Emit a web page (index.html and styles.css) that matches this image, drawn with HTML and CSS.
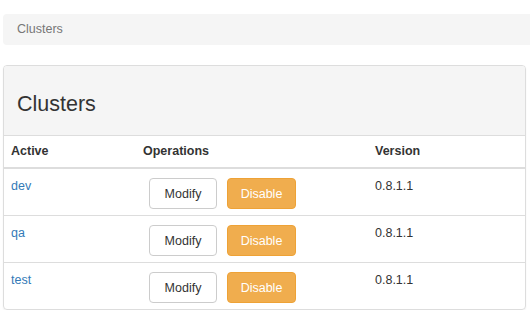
FILE: index.html
```html
<!DOCTYPE html>
<html lang="en">
<head>
    <meta charset="UTF-8">
    <title>Clusters</title>
    <link rel="stylesheet" href="styles.css">
</head>
<body>
    <div class="breadcrumb">Clusters</div>

    <div class="panel">
        <div class="panel-heading">
            <h2>Clusters</h2>
        </div>
        <table class="table">
            <thead>
                <tr>
                    <th class="col-active">Active</th>
                    <th class="col-ops">Operations</th>
                    <th>Version</th>
                </tr>
            </thead>
            <tbody>
                <tr>
                    <td><a href="#">dev</a></td>
                    <td>
                        <div class="ops">
                            <button class="btn btn-default">Modify</button>
                            <button class="btn btn-warning">Disable</button>
                        </div>
                    </td>
                    <td>0.8.1.1</td>
                </tr>
                <tr>
                    <td><a href="#">qa</a></td>
                    <td>
                        <div class="ops">
                            <button class="btn btn-default">Modify</button>
                            <button class="btn btn-warning">Disable</button>
                        </div>
                    </td>
                    <td>0.8.1.1</td>
                </tr>
                <tr>
                    <td><a href="#">test</a></td>
                    <td>
                        <div class="ops">
                            <button class="btn btn-default">Modify</button>
                            <button class="btn btn-warning">Disable</button>
                        </div>
                    </td>
                    <td>0.8.1.1</td>
                </tr>
            </tbody>
        </table>
    </div>
</body>
</html>
```

FILE: styles.css
```css
* {
    box-sizing: border-box;
    margin: 0;
    padding: 0;
}

body {
    font-family: 'Liberation Sans', Arial, sans-serif;
    font-size: 12.5px;
    line-height: 16px;
    color: #333;
    background: #fff;
}

.breadcrumb {
    margin: 14px 0 0 3px;
    height: 31px;
    line-height: 31px;
    padding: 0 14px;
    background-color: #f5f5f5;
    border-radius: 4px 0 0 4px;
    color: #777;
}

.panel {
    margin: 20px 4px 0 3px;
    border: 1px solid #ddd;
    border-radius: 4px;
    box-shadow: 0 1px 2px rgba(0,0,0,0.06);
    overflow: hidden;
}

.panel-heading {
    height: 70px;
    padding: 26px 13px 0;
    background-color: #f5f5f5;
    border-bottom: 1px solid #ddd;
}

.panel-heading h2 {
    font-size: 21.5px;
    font-weight: 500;
    line-height: 24px;
    color: #333;
}

.table {
    width: 100%;
    border-collapse: collapse;
}

.table th {
    text-align: left;
    font-weight: bold;
    padding: 7px 7px 8px;
    border-bottom: 2px solid #ddd;
}

.col-active {
    width: 132px;
}

.col-ops {
    width: 232px;
}

.table td {
    padding: 9px 7px 6px;
    vertical-align: top;
    border-top: 1px solid #ddd;
}

.table tbody tr:first-child td {
    border-top: none;
}

a {
    color: #337ab7;
    text-decoration: none;
}

.ops {
    display: flex;
    gap: 10px;
    padding-left: 6px;
}

.btn {
    height: 31px;
    padding: 0;
    font-family: inherit;
    font-size: 12.5px;
    border: 1px solid transparent;
    border-radius: 4px;
    cursor: pointer;
}

.btn-default {
    width: 68px;
    background: #fff;
    border-color: #ccc;
    color: #333;
}

.btn-warning {
    width: 69px;
    background: #f0ad4e;
    border-color: #eea236;
    color: #fff;
}
```
